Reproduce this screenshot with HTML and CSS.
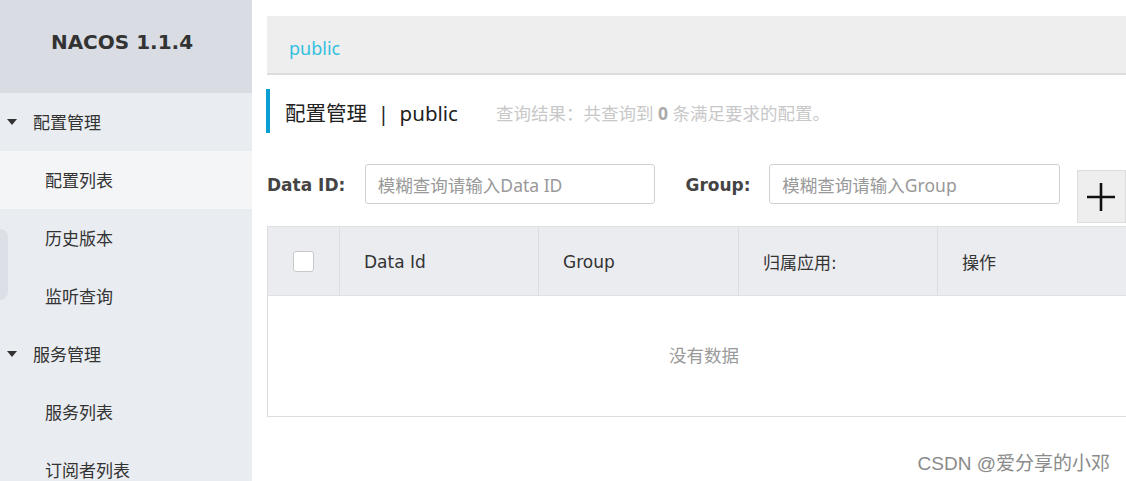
FILE: index.html
```html
<!DOCTYPE html>
<html lang="zh">
    <head>
        <title>Nacos</title>
        <meta charset="utf-8">
        <link rel="stylesheet" href="styles.css">
    </head>
    <body>
        <div class="layout">
            <aside class="sidebar">
                <div class="brand">NACOS 1.1.4</div>
                <ul class="menu">
                    <li class="group"><span class="caret"></span>配置管理</li>
                    <li class="item active">配置列表</li>
                    <li class="item">历史版本</li>
                    <li class="item">监听查询</li>
                    <li class="group"><span class="caret"></span>服务管理</li>
                    <li class="item">服务列表</li>
                    <li class="item">订阅者列表</li>
                </ul>
                <div class="toggle"></div>
            </aside>

            <main class="main">
                <div class="crumb"><span>public</span></div>

                <div class="page-title">
                    <h1>配置管理 &nbsp;|&nbsp; public</h1>
                    <span class="result">查询结果：共查询到 <b>0</b> 条满足要求的配置。</span>
                </div>

                <div class="search">
                    <label class="label">Data ID:</label>
                    <input class="input" placeholder="模糊查询请输入Data ID">
                    <label class="label group-label">Group:</label>
                    <input class="input" placeholder="模糊查询请输入Group">
                    <div class="add">
                        <svg width="30" height="30" viewBox="0 0 30 30">
                            <path d="M15 1V29M1 15H29" stroke="#111" stroke-width="2.6" fill="none"/>
                        </svg>
                    </div>
                </div>

                <div class="table">
                    <div class="thead">
                        <div class="th check"><span class="checkbox"></span></div>
                        <div class="th">Data Id</div>
                        <div class="th">Group</div>
                        <div class="th">归属应用:</div>
                        <div class="th">操作</div>
                    </div>
                    <div class="empty">没有数据</div>
                </div>
            </main>
        </div>
        <div class="watermark">CSDN @爱分享的小邓</div>
    </body>
</html>
```

FILE: styles.css
```css
body {
    margin: 0;
    height: 481px;
    overflow: hidden;
    font-family: "Noto Sans", "Noto Sans CJK SC", sans-serif;
    color: #333;
    background: #fff;
}
.layout {
    display: flex;
    height: 481px;
}
.sidebar {
    position: relative;
    width: 252px;
    flex: none;
    background: #e9ecf0;
}
.brand {
    height: 93px;
    background: #d9dde3;
    display: flex;
    align-items: center;
    justify-content: center;
    font: bold 20px "DejaVu Sans", sans-serif;
    color: #333;
    padding: 0 8px 10px 0;
    box-sizing: border-box;
}
.menu {
    list-style: none;
    margin: 0;
    padding: 0;
}
.menu li {
    height: 58px;
    line-height: 58px;
    font-size: 17px;
    color: #333;
    font-family: "Noto Sans CJK SC", sans-serif;
}
.group {
    padding-left: 7px;
}
.caret {
    display: inline-block;
    width: 0;
    height: 0;
    border-left: 5px solid transparent;
    border-right: 5px solid transparent;
    border-top: 6px solid #333;
    margin-right: 16px;
    vertical-align: 4px;
}
.item {
    padding-left: 45px;
}
.item.active {
    background: #f4f5f7;
}
.toggle {
    position: absolute;
    left: 0;
    top: 229px;
    width: 8px;
    height: 71px;
    background: #dcdfe5;
    border-radius: 0 8px 8px 0;
}
.main {
    flex: 1;
    min-width: 0;
    padding: 16px 0 0 15px;
}
.crumb {
    height: 59px;
    background: #eee;
    border-bottom: 2px solid #ddd;
    padding: 6px 0 0 22px;
    box-sizing: border-box;
    display: flex;
    align-items: center;
    font-size: 18px;
    color: #33bfdf;
}
.page-title {
    display: flex;
    align-items: center;
    height: 44px;
    margin: 14px 0 0 -1px;
    border-left: 4px solid #0a9fd2;
    padding: 2px 0 0 15px;
    box-sizing: border-box;
}
.page-title h1 {
    margin: 0;
    font-weight: normal;
    font-size: 20.5px;
    color: #222;
    font-family: "Noto Sans", "Noto Sans CJK SC", sans-serif;
}
.result {
    margin-left: 38px;
    font: 17.5px "Noto Sans", "Noto Sans CJK TC", sans-serif;
    color: #c8c8c8;
}
.result b {
    color: #aaa;
}
.search {
    display: flex;
    align-items: flex-start;
    margin-top: 31px;
}
.label {
    height: 40px;
    font: bold 17px/42px "DejaVu Sans", sans-serif;
    color: #444;
    width: 98px;
}
.group-label {
    margin-left: 30px;
    width: 84px;
}
.input {
    width: 291px;
    height: 40px;
    box-sizing: border-box;
    border: 1px solid #cfcfd6;
    border-radius: 3px;
    padding: 2px 12px 0;
    font: 17.5px "Noto Sans", "Noto Sans CJK SC", sans-serif;
    outline: none;
}
.input::placeholder {
    color: #999;
}
.add {
    margin: 6px 0 0 17px;
    width: 49px;
    height: 53px;
    box-sizing: border-box;
    background: #eee;
    border: 1px solid #ddd;
    display: flex;
    align-items: center;
    justify-content: center;
    flex: none;
}
.table {
    margin-top: 3px;
    width: 872px;
    border-left: 1px solid #ddd;
    border-bottom: 1px solid #ddd;
}
.thead {
    display: grid;
    grid-template-columns: 72px 199px 200px 199px 1fr;
    height: 70px;
    background: #ebecf0;
    border-top: 1px solid #e0e0e4;
    border-bottom: 1px solid #e0e0e4;
    box-sizing: border-box;
}
.th {
    display: flex;
    align-items: center;
    padding: 1px 0 0 24px;
    font: 17px "DejaVu Sans", "Noto Sans CJK SC", sans-serif;
    color: #333;
    border-right: 1px solid #dcdde2;
}
.th.check {
    padding-left: 0;
    justify-content: center;
}
.checkbox {
    width: 21px;
    height: 21px;
    box-sizing: border-box;
    background: #fff;
    border: 1px solid #c8c8cc;
    border-radius: 3px;
}
.empty {
    height: 120px;
    line-height: 118px;
    text-align: center;
    font-size: 17.5px;
    color: #999;
    font-family: "Noto Sans CJK SC", sans-serif;
}
.watermark {
    position: absolute;
    right: 16px;
    bottom: 6px;
    font: 19px "Liberation Sans", "Noto Sans CJK SC", sans-serif;
    color: #8a8a8a;
}
```
